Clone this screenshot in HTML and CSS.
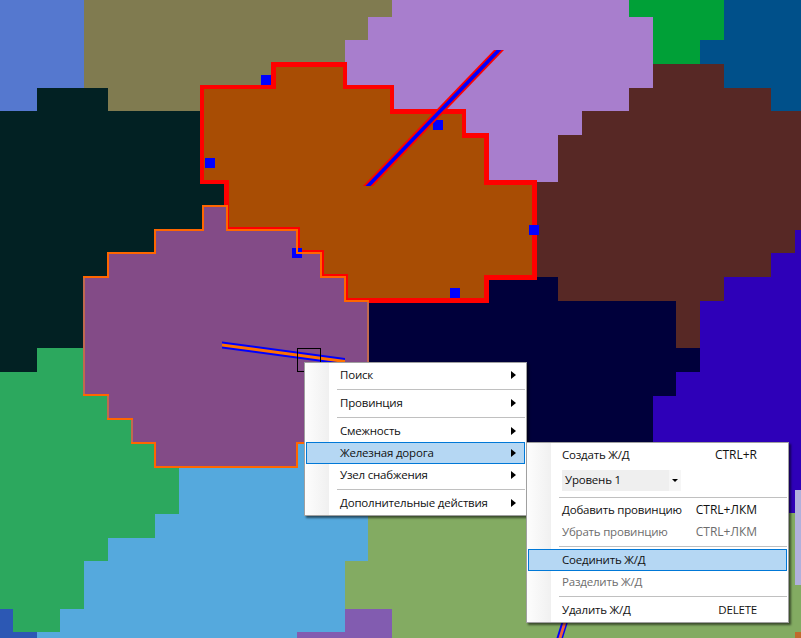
FILE: index.html
```html
<!DOCTYPE html>
<html lang="ru">
<head>
<meta charset="utf-8">
<title>Карта</title>
<link rel="stylesheet" href="styles.css">
</head>
<body>
<div class="stage">
  <svg class="map" width="801" height="638" viewBox="0 0 801 638" xmlns="http://www.w3.org/2000/svg">
    <g class="regions">
      <rect class="c-olivegreen" x="345" y="445" width="456" height="193"/>
      <rect class="c-blue" x="0" y="0" width="84" height="111"/>
      <polygon class="c-olive" points="84,0 392,0 392,17 368,17 368,40 345,40 345,111 84,111"/>
      <polygon class="c-teal" points="0,111 37,111 37,88 108,88 108,111 240,111 240,300 84,348 37,348 37,372 0,372"/>
      <polygon class="c-green" points="0,372 37,372 37,348 179,348 179,514 155,514 155,538 108,538 108,561 84,561 84,609 60,609 60,632 13,632 13,609 0,609"/>
      <polygon class="c-deepblue" points="0,609 13,609 13,632 37,632 37,638 0,638"/>
      <polygon class="c-sky" points="37,632 60,632 60,609 84,609 84,561 108,561 108,538 155,538 155,514 179,514 179,430 368,430 368,561 345,561 345,632 297,632 297,638 37,638"/>
      <polygon class="c-violet2" points="345,609 392,609 392,638 297,638 297,632 345,632"/>
      <polygon class="c-lilac" points="392,0 629,0 629,17 653,17 653,88 629,88 629,111 582,111 582,135 558,135 558,182 530,182 530,200 400,200 345,87 345,40 368,40 368,17 392,17"/>
      <polygon class="c-emerald" points="629,0 724,0 724,40 700,40 700,64 653,64 653,17 629,17"/>
      <polygon class="c-ocean" points="724,0 801,0 801,111 771,111 771,88 724,88 724,64 700,64 700,40 724,40"/>
      <polygon class="c-navy" points="345,277 558,277 558,301 676,301 676,348 700,348 700,372 676,372 676,396 653,396 653,445 345,445"/>
      <polygon class="c-indigo" points="801,230 795,230 795,253 771,253 771,277 724,277 724,301 700,301 700,372 676,372 676,396 653,396 653,513 801,513"/>
      <polygon class="c-brown" points="653,64 724,64 724,88 771,88 771,111 801,111 801,230 795,230 795,253 771,253 771,277 724,277 724,301 700,301 700,348 676,348 676,301 558,301 558,277 530,277 530,182 558,182 558,135 582,135 582,111 629,111 629,88 653,88"/>
      <rect class="c-lavender" x="795" y="490" width="6" height="95"/>
      <rect class="c-rust" x="795" y="632" width="6" height="6"/>
    </g>
    <polygon class="selected" points="202,87 273.5,87 273.5,64.5 345,64.5 345,87 392,87 392,111.5 464,111.5 464,135.5 486.5,135.5 486.5,182.5 534.5,182.5 534.5,277.5 486.5,277.5 486.5,300.5 346,300.5 346,276 322,276 322,252.5 298,252.5 298,229 226.5,229 226.5,182 202,182"/>
    <polygon class="hovered-fill" points="203,206 227,206 227,230 297,230 297,253 321,253 321,277 345,277 345,301 368,301 368,443 297,443 297,467 155,467 155,443 132,443 132,419 108,419 108,395 84,395 84,277 108,277 108,253 155,253 155,230 203,230"/>
    <g class="pins">
      <rect x="261" y="75" width="10" height="10"/>
      <rect x="205" y="158" width="10" height="10"/>
      <rect x="292" y="248" width="10" height="10"/>
      <rect x="433" y="120" width="10" height="10"/>
      <rect x="529" y="225" width="10" height="10"/>
      <rect x="450" y="288" width="10" height="10"/>
    </g>
    <polygon class="hovered-line" points="203,206 227,206 227,230 297,230 297,253 321,253 321,277 345,277 345,301 368,301 368,443 297,443 297,467 155,467 155,443 132,443 132,419 108,419 108,395 84,395 84,277 108,277 108,253 155,253 155,230 203,230"/>
    <path class="hovered-soft" d="M84 278V394M108 396V418M132 420V442M368 302V442"/>
    <polygon class="rail-red" points="363,186 373,186 504,50 494,50"/>
    <polygon class="rail-blue" points="365.5,186 370.5,186 501.5,50 496.5,50"/>
    <polygon class="rail-blue" points="222,341.5 222,348.5 345,365 345,358"/>
    <polygon class="rail-orange" points="222,343.5 222,346.5 345,363 345,360"/>
    <polygon class="rail-blue" points="561.5,622 568,622 563,638 556.5,638"/>
    <polygon class="rail-coral" points="563.5,622 566.5,622 561.5,638 558.5,638"/>
    <rect class="cursor" x="297.5" y="348.5" width="23" height="23"/>
  </svg>

  <div class="menu menu-main">
    <div class="item"><span>Поиск</span><i class="arrow"></i></div>
    <div class="sep"></div>
    <div class="item"><span>Провинция</span><i class="arrow"></i></div>
    <div class="sep"></div>
    <div class="item"><span>Смежность</span><i class="arrow"></i></div>
    <div class="item active"><span>Железная дорога</span><i class="arrow"></i></div>
    <div class="item"><span>Узел снабжения</span><i class="arrow"></i></div>
    <div class="sep"></div>
    <div class="item"><span>Дополнительные действия</span><i class="arrow"></i></div>
  </div>

  <div class="menu menu-sub">
    <div class="item"><span>Создать Ж/Д</span><span class="key">CTRL+R</span></div>
    <div class="combo-row">
      <div class="combo">Уровень 1</div>
      <div class="combo-btn"><i class="caret"></i></div>
    </div>
    <div class="sep sep-short"></div>
    <div class="item"><span>Добавить провинцию</span><span class="key">CTRL+ЛКМ</span></div>
    <div class="item disabled"><span>Убрать провинцию</span><span class="key">CTRL+ЛКМ</span></div>
    <div class="sep"></div>
    <div class="item active"><span>Соединить Ж/Д</span></div>
    <div class="item disabled"><span>Разделить Ж/Д</span></div>
    <div class="sep"></div>
    <div class="item"><span>Удалить Ж/Д</span><span class="key key-tight">DELETE</span></div>
  </div>
</div>
</body>
</html>
```
FILE: styles.css
```css
* { box-sizing: border-box; }
html, body { margin: 0; padding: 0; background: #83ab62; }
.stage { position: relative; width: 801px; height: 638px; overflow: hidden; }
.map { position: absolute; left: 0; top: 0; display: block; }

.regions { shape-rendering: crispEdges; }
.c-olivegreen { fill: #83ab62; }
.c-blue { fill: #5578cf; }
.c-olive { fill: #807b50; }
.c-teal { fill: #022123; }
.c-green { fill: #2ca85e; }
.c-deepblue { fill: #2c58b4; }
.c-sky { fill: #55a9dd; }
.c-violet2 { fill: #825cb0; }
.c-lilac { fill: #a87ecd; }
.c-emerald { fill: #00a037; }
.c-ocean { fill: #00508a; }
.c-navy { fill: #00003b; }
.c-indigo { fill: #2e00b8; }
.c-brown { fill: #572825; }
.c-lavender { fill: #b0b0dd; }
.c-rust { fill: #c06a2c; }

.selected { fill: #a84d04; stroke: #ff0000; stroke-width: 4.5; shape-rendering: crispEdges; stroke-linejoin: miter; }
.pins rect { fill: #0000ff; shape-rendering: crispEdges; }
.hovered-fill { fill: #834b87; shape-rendering: crispEdges; }
.hovered-line { fill: none; stroke: #ff6600; stroke-width: 2; shape-rendering: crispEdges; }
.hovered-soft { fill: none; stroke: #c0694f; stroke-width: 2; shape-rendering: crispEdges; }
.rail-red { fill: #ff0000; }
.rail-blue { fill: #0000ff; }
.rail-orange { fill: #ff7000; }
.rail-coral { fill: #f0603a; }
.cursor { fill: none; stroke: #000; stroke-width: 1; shape-rendering: crispEdges; }

.menu {
  position: absolute;
  display: flex;
  flex-direction: column;
  padding: 2px 1px 1px;
  border: 1px solid #a0a0a0;
  background: linear-gradient(90deg, #fdfdfd, #f0f0f0) 0 0 / 24px 100% no-repeat, #fff;
  box-shadow: 2px 2px 2px rgba(0, 0, 0, .55);
  font: 11.5px/16px "Open Sans", "Noto Sans", sans-serif;
  letter-spacing: -.2px;
  color: #111;
}
.menu-main { left: 304px; top: 362px; width: 223px; height: 154px; }
.menu-sub { left: 526px; top: 442px; width: 263px; height: 181px; }

.item {
  display: flex;
  align-items: center;
  justify-content: space-between;
  height: 22px;
  padding: 0 8px 1px 33px;
  white-space: nowrap;
  border: 1px solid transparent;
}
.menu-sub .item { padding-right: 29px; }
.item.active { background: #b5d7f3; border-color: #0078d7; }
.item.disabled { color: #6d6d6d; }
.key { font-size: 12px; letter-spacing: 0; }
.key-tight { font-size: 11.5px; letter-spacing: -.2px; }
.sep { height: 6px; margin-left: 31px; display: flex; align-items: center; }
.sep::before { content: ""; flex: 1; height: 1px; background: #c0c0c0; }
.sep-short { height: 5px; }

.arrow {
  display: block;
  width: 0;
  height: 0;
  border-left: 5px solid #000;
  border-top: 4px solid transparent;
  border-bottom: 4px solid transparent;
}

.combo-row { display: flex; height: 28px; padding: 3px 0 4px 34px; }
.combo { width: 107px; padding-left: 3px; background: #efefef; line-height: 20px; }
.combo-btn { width: 12px; background: #f6f6f6; display: flex; align-items: center; justify-content: center; }
.caret {
  display: block;
  width: 0;
  height: 0;
  border-top: 3px solid #000;
  border-left: 3px solid transparent;
  border-right: 3px solid transparent;
}
```
